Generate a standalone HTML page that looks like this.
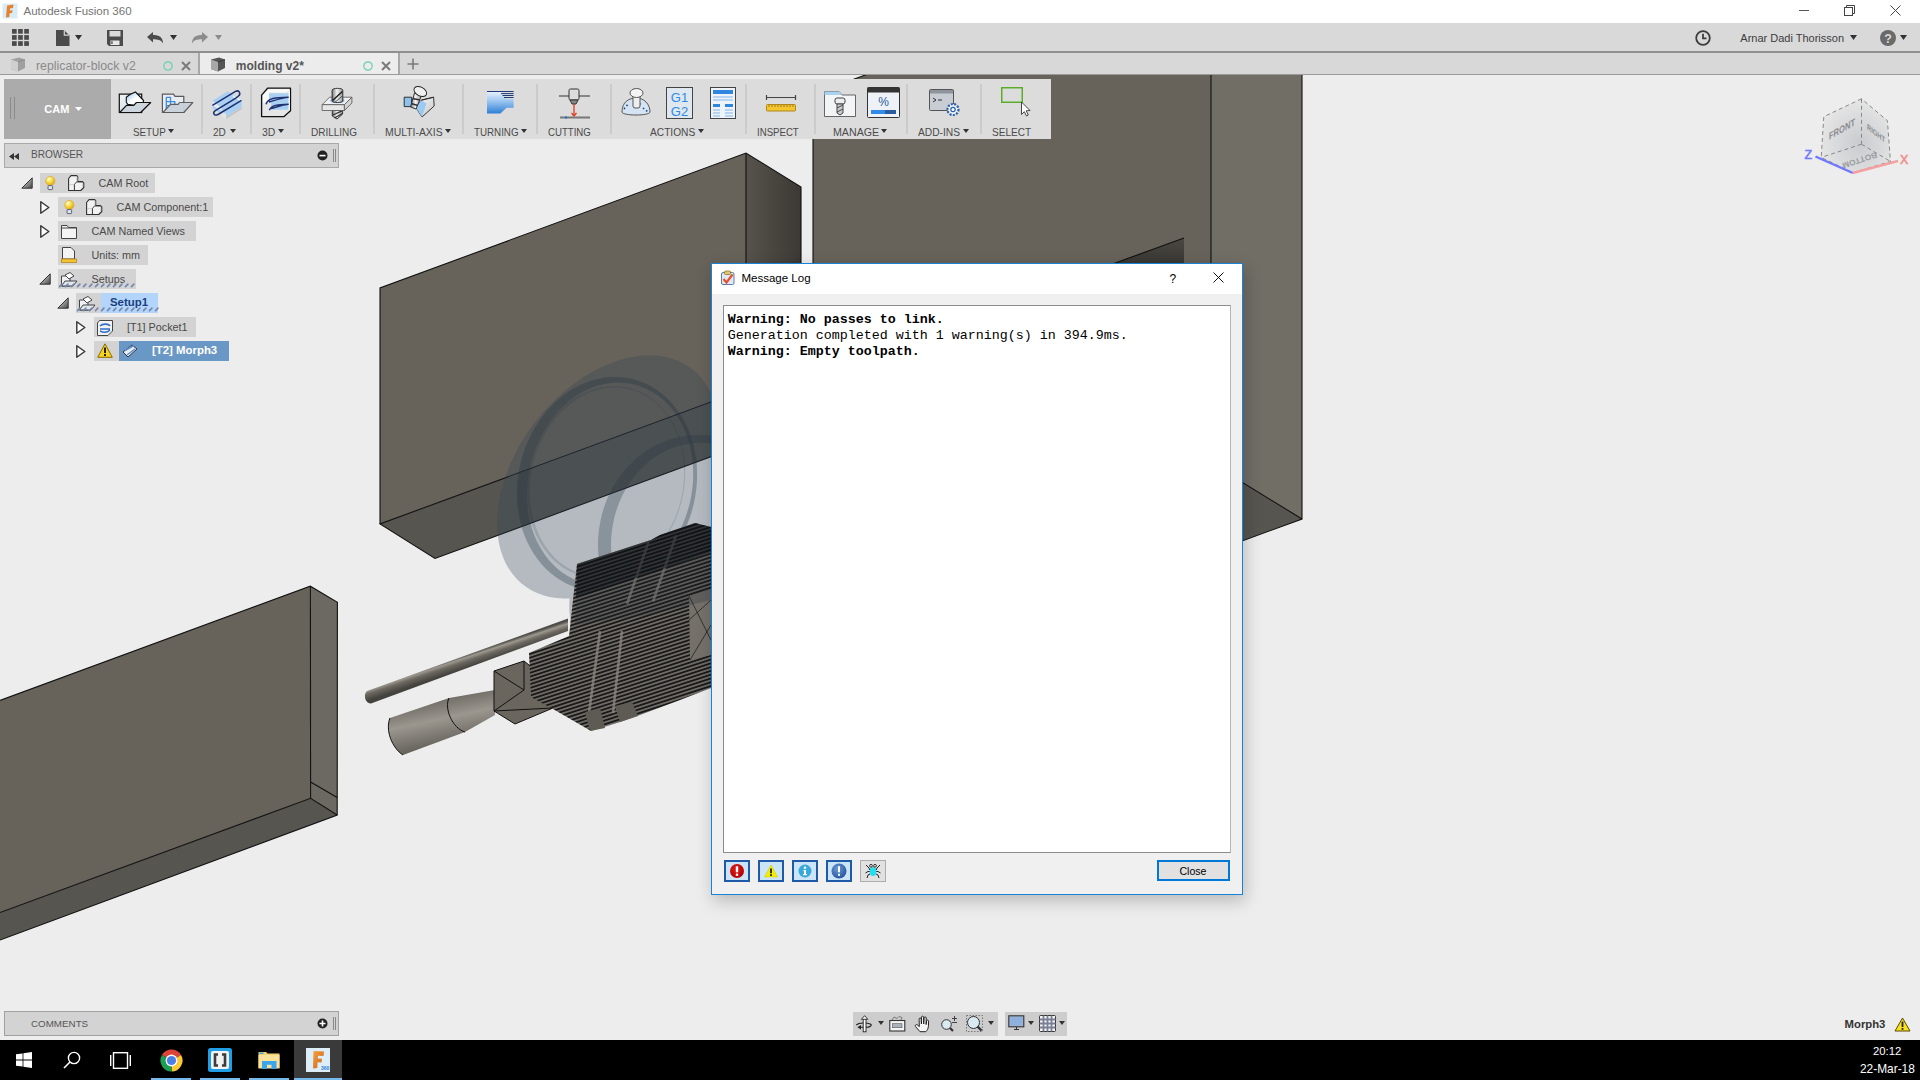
<!DOCTYPE html>
<html><head><meta charset="utf-8">
<style>
*{margin:0;padding:0;box-sizing:border-box}
html,body{width:1920px;height:1080px;overflow:hidden;background:#ededed;font-family:"Liberation Sans",sans-serif}
.a{position:absolute}
.t{position:absolute;white-space:nowrap;line-height:1}
svg{overflow:visible}
</style></head><body>
<div class="a" style="left:0;top:75px;width:1920px;height:965px;overflow:hidden"><svg class="a" style="left:0;top:0" width="1920" height="965" viewBox="0 75 1920 965">
<defs>
<linearGradient id="gA" x1="0" y1="0" x2="1" y2="0"><stop offset="0" stop-color="#57534c"/><stop offset="1" stop-color="#3b3934"/></linearGradient>
<linearGradient id="gTri" x1="0" y1="0" x2="0" y2="1"><stop offset="0" stop-color="#4a4842"/><stop offset="1" stop-color="#34322e"/></linearGradient>
<linearGradient id="gRod" gradientUnits="userSpaceOnUse" x1="465" y1="655" x2="469" y2="667"><stop offset="0" stop-color="#4f4d48"/><stop offset="0.22" stop-color="#9c988f"/><stop offset="0.5" stop-color="#6c6861"/><stop offset="1" stop-color="#45433e"/></linearGradient>
<linearGradient id="gCone" x1="0" y1="0" x2="0.35" y2="1"><stop offset="0" stop-color="#9a968c"/><stop offset="0.3" stop-color="#74706a"/><stop offset="0.55" stop-color="#9b978f"/><stop offset="1" stop-color="#5a5751"/></linearGradient>
<pattern id="hatch" patternUnits="userSpaceOnUse" width="8" height="3.6" patternTransform="rotate(-18)"><rect width="8" height="3.6" fill="#6f6b62"/><rect y="0" width="8" height="1.8" fill="#18191a"/></pattern>
</defs>
<!-- Box C -->
<polygon points="0,700.4 310.3,586.2 310.6,798.3 0,912.6" fill="#67625a"/>
<polygon points="310.3,586.2 337.4,602.4 337.2,815 310.6,798.3" fill="#6b6961"/>
<polygon points="0,912.6 310.6,798.3 337.2,815 0,940" fill="#575550"/>
<g stroke="#111" stroke-width="1.1" fill="none">
<polyline points="0,700.4 310.3,586.2 337.4,602.4 337.2,815 0,940"/>
<line x1="310.4" y1="586.2" x2="310.6" y2="798.3"/>
<polyline points="0,912.6 310.6,798.3 337.2,815"/>
<line x1="310.6" y1="782" x2="337.2" y2="797.5"/>
</g>
<!-- Box A -->
<polygon points="380,288 746,153 746,389 380,524" fill="#67625a"/>
<polygon points="746,153 801,187 801,423 746,389" fill="url(#gA)"/>
<polygon points="380,524 746,389 801,423.5 435,558.5" fill="#575550"/>
<g stroke="#111" stroke-width="1.1" fill="none">
<polyline points="380,524 380,288 746,153 801,187 801,423.5 435,558.5 380,524 746,389 801,423.5"/>
<line x1="746" y1="153" x2="746" y2="389"/>
</g>
<!-- Box B -->
<polygon points="813,94.2 1211,-52 1211,463 813,609.5" fill="#67625a"/>
<polygon points="1211,-52 1302,4 1302,519 1211,463" fill="#716e66"/>
<polygon points="813,609.5 1211,463 1302,519 904,665" fill="#575550"/>
<polygon points="1184,238 1184,270 1096,270" fill="url(#gTri)"/>
<g stroke="#111" stroke-width="1.1" fill="none">
<polyline points="813,94.2 1211,-52 1302,4 1302,519 904,665 813,609.5 813,94.2"/>
<line x1="1211" y1="-52" x2="1211" y2="463"/>
<polyline points="813,609.5 1211,463 1302,519"/>
<polyline points="1184,238 1096,270"/>
</g>
<!-- ghost holder -->
<g><path d="M679.4,533.0 L673.4,540.4 L667.0,547.5 L660.3,554.2 L653.4,560.6 L646.2,566.6 L638.9,572.1 L631.4,577.2 L623.8,581.7 L616.1,585.8 L608.4,589.3 L600.7,592.3 L593.0,594.7 L585.4,596.6 L577.9,597.8 L570.5,598.5 L563.3,598.6 L556.4,598.1 L549.6,597.0 L543.2,595.3 L537.1,593.0 L531.3,590.2 L525.9,586.8 L520.9,582.9 L516.3,578.5 L512.2,573.6 L508.5,568.2 L505.3,562.4 L502.6,556.1 L500.5,549.5 L498.8,542.5 L497.7,535.2 L497.1,527.6 L497.0,519.7 L497.5,511.7 L498.6,503.5 L500.1,495.1 L502.2,486.7 L504.8,478.2 L507.9,469.7 L511.5,461.3 L515.5,452.9 L520.0,444.6 L525.0,436.5 L530.3,428.6 L536.0,421.0 L542.0,413.6 L548.4,406.5 L555.1,399.8 L562.0,393.4 L569.2,387.4 L576.5,381.9 L584.0,376.8 L591.6,372.3 L599.3,368.2 L607.0,364.7 L614.7,361.7 L622.4,359.3 L630.0,357.4 L637.5,356.2 L644.9,355.5 L652.1,355.4 L659.0,355.9 L665.8,357.0 L672.2,358.7 L678.3,361.0 L684.1,363.8 L689.5,367.2 L694.5,371.1 L699.1,375.5 L703.2,380.4 L706.9,385.8 L710.1,391.6 L712.8,397.9 L714.9,404.5 L716.6,411.5 L717.7,418.8 L718.3,426.4 L718.4,434.3 L717.9,442.3 L716.8,450.5 L715.3,458.9 L713.2,467.3 L710.6,475.8 L707.5,484.3 L703.9,492.7 L699.9,501.1 L695.4,509.4 L690.4,517.5 L685.1,525.4 Z M751.7,616.0 L745.7,623.4 L739.3,630.5 L732.6,637.2 L725.7,643.6 L718.5,649.6 L711.2,655.1 L703.7,660.2 L696.1,664.7 L688.4,668.8 L680.7,672.3 L673.0,675.3 L665.3,677.7 L657.7,679.6 L650.2,680.8 L642.8,681.5 L635.6,681.6 L628.7,681.1 L621.9,680.0 L615.5,678.3 L609.4,676.0 L603.6,673.2 L598.2,669.8 L593.2,665.9 L588.6,661.5 L584.5,656.6 L580.8,651.2 L577.6,645.4 L574.9,639.1 L572.8,632.5 L571.1,625.5 L570.0,618.2 L569.4,610.6 L569.3,602.7 L569.8,594.7 L570.9,586.5 L572.4,578.1 L574.5,569.7 L577.1,561.2 L580.2,552.7 L583.8,544.3 L587.8,535.9 L592.3,527.6 L597.3,519.5 L602.6,511.6 L608.3,504.0 L614.3,496.6 L620.7,489.5 L627.4,482.8 L634.3,476.4 L641.5,470.4 L648.8,464.9 L656.3,459.8 L663.9,455.3 L671.6,451.2 L679.3,447.7 L687.0,444.7 L694.7,442.3 L702.3,440.4 L709.8,439.2 L717.2,438.5 L724.4,438.4 L731.3,438.9 L738.1,440.0 L744.5,441.7 L750.6,444.0 L756.4,446.8 L761.8,450.2 L766.8,454.1 L771.4,458.5 L775.5,463.4 L779.2,468.8 L782.4,474.6 L785.1,480.9 L787.2,487.5 L788.9,494.5 L790.0,501.8 L790.6,509.4 L790.7,517.3 L790.2,525.3 L789.1,533.5 L787.6,541.9 L785.5,550.3 L782.9,558.8 L779.8,567.3 L776.2,575.7 L772.2,584.1 L767.7,592.4 L762.7,600.5 L757.4,608.4 Z" fill-rule="nonzero" fill="rgba(50,70,90,0.30)"/><path d="M693.6,504.6 L691.6,511.9 L689.3,519.0 L686.5,526.0 L683.3,532.8 L679.8,539.3 L675.9,545.6 L671.7,551.5 L667.2,557.2 L662.3,562.4 L657.2,567.3 L651.9,571.8 L646.3,575.9 L640.6,579.5 L634.7,582.6 L628.6,585.3 L622.5,587.5 L616.2,589.1 L610.0,590.3 L603.7,590.9 L597.4,591.0 L591.2,590.6 L585.0,589.7 L579.0,588.3 L573.1,586.3 L567.3,583.9 L561.8,580.9 L556.4,577.5 L551.4,573.7 L546.6,569.4 L542.0,564.7 L537.8,559.6 L534.0,554.1 L530.5,548.3 L527.3,542.1 L524.6,535.7 L522.2,529.1 L520.3,522.2 L518.8,515.1 L517.7,507.9 L517.1,500.6 L516.9,493.1 L517.1,485.7 L517.8,478.2 L518.9,470.8 L520.4,463.4 L522.4,456.1 L524.7,449.0 L527.5,442.0 L530.7,435.2 L534.2,428.7 L538.1,422.4 L542.3,416.5 L546.8,410.8 L551.7,405.6 L556.8,400.7 L562.1,396.2 L567.7,392.1 L573.4,388.5 L579.3,385.4 L585.4,382.7 L591.5,380.5 L597.8,378.9 L604.0,377.7 L610.3,377.1 L616.6,377.0 L622.8,377.4 L629.0,378.3 L635.0,379.7 L640.9,381.7 L646.7,384.1 L652.2,387.1 L657.6,390.5 L662.6,394.3 L667.4,398.6 L672.0,403.3 L676.2,408.4 L680.0,413.9 L683.5,419.7 L686.7,425.9 L689.4,432.3 L691.8,438.9 L693.7,445.8 L695.2,452.9 L696.3,460.1 L696.9,467.4 L697.1,474.9 L696.9,482.3 L696.2,489.8 L695.1,497.2 Z M689.8,503.0 L687.9,509.9 L685.7,516.7 L683.1,523.3 L680.1,529.7 L676.8,535.9 L673.2,541.9 L669.3,547.5 L665.1,552.9 L660.6,557.9 L655.9,562.6 L650.9,566.9 L645.7,570.7 L640.4,574.2 L634.9,577.2 L629.3,579.8 L623.6,581.9 L617.9,583.5 L612.1,584.6 L606.3,585.3 L600.5,585.4 L594.7,585.1 L589.1,584.2 L583.5,582.9 L578.1,581.1 L572.8,578.8 L567.7,576.1 L562.8,572.9 L558.1,569.2 L553.7,565.2 L549.6,560.8 L545.7,556.0 L542.2,550.8 L539.0,545.3 L536.1,539.5 L533.6,533.5 L531.5,527.2 L529.8,520.7 L528.4,514.0 L527.5,507.2 L526.9,500.2 L526.8,493.2 L527.0,486.1 L527.7,479.0 L528.8,472.0 L530.2,465.0 L532.1,458.1 L534.3,451.3 L536.9,444.7 L539.9,438.3 L543.2,432.1 L546.8,426.1 L550.7,420.5 L554.9,415.1 L559.4,410.1 L564.1,405.4 L569.1,401.1 L574.3,397.3 L579.6,393.8 L585.1,390.8 L590.7,388.2 L596.4,386.1 L602.1,384.5 L607.9,383.4 L613.7,382.7 L619.5,382.6 L625.3,382.9 L630.9,383.8 L636.5,385.1 L641.9,386.9 L647.2,389.2 L652.3,391.9 L657.2,395.1 L661.9,398.8 L666.3,402.8 L670.4,407.2 L674.3,412.0 L677.8,417.2 L681.0,422.7 L683.9,428.5 L686.4,434.5 L688.5,440.8 L690.2,447.3 L691.6,454.0 L692.5,460.8 L693.1,467.8 L693.2,474.8 L693.0,481.9 L692.3,489.0 L691.2,496.0 Z" fill-rule="evenodd" fill="rgba(30,45,60,0.30)"/><path d="M681.9,500.1 L680.1,506.6 L678.0,513.0 L675.5,519.3 L672.7,525.4 L669.6,531.3 L666.2,536.9 L662.4,542.3 L658.4,547.3 L654.2,552.1 L649.7,556.5 L645.0,560.6 L640.1,564.2 L635.0,567.5 L629.8,570.3 L624.5,572.8 L619.1,574.7 L613.6,576.3 L608.1,577.3 L602.5,577.9 L597.0,578.1 L591.6,577.7 L586.2,576.9 L580.9,575.7 L575.7,574.0 L570.7,571.8 L565.8,569.2 L561.2,566.2 L556.7,562.7 L552.5,558.9 L548.6,554.7 L544.9,550.1 L541.6,545.2 L538.5,540.0 L535.8,534.5 L533.4,528.8 L531.4,522.8 L529.7,516.7 L528.5,510.3 L527.5,503.9 L527.0,497.3 L526.9,490.6 L527.1,483.9 L527.7,477.2 L528.7,470.5 L530.1,463.9 L531.9,457.4 L534.0,451.0 L536.5,444.7 L539.3,438.6 L542.4,432.7 L545.8,427.1 L549.6,421.7 L553.6,416.7 L557.8,411.9 L562.3,407.5 L567.0,403.4 L571.9,399.8 L577.0,396.5 L582.2,393.7 L587.5,391.2 L592.9,389.3 L598.4,387.7 L603.9,386.7 L609.5,386.1 L615.0,385.9 L620.4,386.3 L625.8,387.1 L631.1,388.3 L636.3,390.0 L641.3,392.2 L646.2,394.8 L650.8,397.8 L655.3,401.3 L659.5,405.1 L663.4,409.3 L667.1,413.9 L670.4,418.8 L673.5,424.0 L676.2,429.5 L678.6,435.2 L680.6,441.2 L682.3,447.3 L683.5,453.7 L684.5,460.1 L685.0,466.7 L685.1,473.4 L684.9,480.1 L684.3,486.8 L683.3,493.5 Z M680.9,499.6 L679.2,506.0 L677.1,512.4 L674.7,518.5 L672.0,524.5 L668.9,530.3 L665.5,535.8 L661.9,541.1 L658.0,546.1 L653.8,550.8 L649.4,555.1 L644.8,559.1 L640.0,562.8 L635.1,566.0 L630.0,568.8 L624.8,571.2 L619.5,573.1 L614.2,574.6 L608.8,575.7 L603.4,576.3 L598.1,576.5 L592.7,576.1 L587.5,575.4 L582.3,574.1 L577.3,572.5 L572.4,570.3 L567.7,567.8 L563.1,564.8 L558.8,561.4 L554.7,557.7 L550.9,553.6 L547.3,549.1 L544.1,544.3 L541.1,539.2 L538.5,533.8 L536.2,528.2 L534.2,522.3 L532.6,516.2 L531.3,510.0 L530.5,503.7 L530.0,497.2 L529.8,490.6 L530.1,484.1 L530.7,477.5 L531.7,470.9 L533.1,464.4 L534.8,458.0 L536.9,451.6 L539.3,445.5 L542.0,439.5 L545.1,433.7 L548.5,428.2 L552.1,422.9 L556.0,417.9 L560.2,413.2 L564.6,408.9 L569.2,404.9 L574.0,401.2 L578.9,398.0 L584.0,395.2 L589.2,392.8 L594.5,390.9 L599.8,389.4 L605.2,388.3 L610.6,387.7 L615.9,387.5 L621.3,387.9 L626.5,388.6 L631.7,389.9 L636.7,391.5 L641.6,393.7 L646.3,396.2 L650.9,399.2 L655.2,402.6 L659.3,406.3 L663.1,410.4 L666.7,414.9 L669.9,419.7 L672.9,424.8 L675.5,430.2 L677.8,435.8 L679.8,441.7 L681.4,447.8 L682.7,454.0 L683.5,460.3 L684.0,466.8 L684.2,473.4 L683.9,479.9 L683.3,486.5 L682.3,493.1 Z" fill-rule="evenodd" fill="rgba(30,45,60,0.15)"/><path d="M798.0,545.0 L797.8,552.7 L797.0,560.3 L795.8,567.9 L794.1,575.3 L792.0,582.6 L789.4,589.7 L786.3,596.6 L782.8,603.3 L778.9,609.7 L774.6,615.7 L769.9,621.4 L764.9,626.7 L759.6,631.7 L753.9,636.2 L748.0,640.3 L741.8,643.9 L735.5,647.0 L728.9,649.6 L722.2,651.7 L715.4,653.3 L708.5,654.4 L701.5,654.9 L694.5,654.9 L687.5,654.4 L680.6,653.3 L673.8,651.7 L667.1,649.6 L660.5,647.0 L654.2,643.9 L648.0,640.3 L642.1,636.2 L636.4,631.7 L631.1,626.7 L626.1,621.4 L621.4,615.7 L617.1,609.7 L613.2,603.3 L609.7,596.6 L606.6,589.7 L604.0,582.6 L601.9,575.3 L600.2,567.9 L599.0,560.3 L598.2,552.7 L598.0,545.0 L598.2,537.3 L599.0,529.7 L600.2,522.1 L601.9,514.7 L604.0,507.4 L606.6,500.3 L609.7,493.4 L613.2,486.7 L617.1,480.3 L621.4,474.3 L626.1,468.6 L631.1,463.3 L636.4,458.3 L642.1,453.8 L648.0,449.7 L654.2,446.1 L660.5,443.0 L667.1,440.4 L673.8,438.3 L680.6,436.7 L687.5,435.6 L694.5,435.1 L701.5,435.1 L708.5,435.6 L715.4,436.7 L722.2,438.3 L728.9,440.4 L735.5,443.0 L741.8,446.1 L748.0,449.7 L753.9,453.8 L759.6,458.3 L764.9,463.3 L769.9,468.6 L774.6,474.3 L778.9,480.3 L782.8,486.7 L786.3,493.4 L789.4,500.3 L792.0,507.4 L794.1,514.7 L795.8,522.1 L797.0,529.7 L797.8,537.3 Z M792.0,545.0 L791.8,552.1 L791.1,559.3 L790.0,566.3 L788.5,573.2 L786.5,580.0 L784.2,586.6 L781.4,593.1 L778.2,599.3 L774.7,605.2 L770.8,610.8 L766.6,616.1 L762.1,621.1 L757.2,625.7 L752.1,629.9 L746.8,633.7 L741.2,637.0 L735.4,639.9 L729.5,642.4 L723.4,644.4 L717.2,645.8 L711.0,646.8 L704.7,647.3 L698.3,647.3 L692.0,646.8 L685.8,645.8 L679.6,644.4 L673.5,642.4 L667.6,639.9 L661.8,637.0 L656.2,633.7 L650.9,629.9 L645.8,625.7 L640.9,621.1 L636.4,616.1 L632.2,610.8 L628.3,605.2 L624.8,599.3 L621.6,593.1 L618.8,586.6 L616.5,580.0 L614.5,573.2 L613.0,566.3 L611.9,559.3 L611.2,552.1 L611.0,545.0 L611.2,537.9 L611.9,530.7 L613.0,523.7 L614.5,516.8 L616.5,510.0 L618.8,503.4 L621.6,496.9 L624.8,490.7 L628.3,484.8 L632.2,479.2 L636.4,473.9 L640.9,468.9 L645.8,464.3 L650.9,460.1 L656.2,456.3 L661.8,453.0 L667.6,450.1 L673.5,447.6 L679.6,445.6 L685.8,444.2 L692.0,443.2 L698.3,442.7 L704.7,442.7 L711.0,443.2 L717.2,444.2 L723.4,445.6 L729.5,447.6 L735.4,450.1 L741.2,453.0 L746.8,456.3 L752.1,460.1 L757.2,464.3 L762.1,468.9 L766.6,473.9 L770.8,479.2 L774.7,484.8 L778.2,490.7 L781.4,496.9 L784.2,503.4 L786.5,510.0 L788.5,516.8 L790.0,523.7 L791.1,530.7 L791.8,537.9 Z" fill-rule="evenodd" fill="rgba(40,55,70,0.30)"/></g>
<!-- rod -->
<path d="M367,691 L568,618.5 L568,631 L371,703.5 C365,704 363,694 367,691 Z" fill="url(#gRod)"/>
<!-- cone -->
<path d="M390,718 L449,698 L495,690 L495,715 L465,732 L403,755 C392,748 385,730 390,718 Z" fill="url(#gCone)"/>
<path d="M449,698 C444,708 452,728 465,732" stroke="#111" stroke-width="1" fill="none"/>
<path d="M390,718 C385,730 392,748 403,755" stroke="#111" stroke-width="1" fill="none"/>
<!-- holder cube -->
<polygon points="494,671 524,661 560,690 553,708 515,724 494,711" fill="#6a665e"/>
<g stroke="#111" stroke-width="1" fill="none">
<polyline points="494,671 524,661 560,690 553,708 515,724 494,711 494,671"/>
<line x1="494" y1="671" x2="524" y2="690"/><line x1="494" y1="711" x2="524" y2="690"/><line x1="494" y1="711" x2="553" y2="708"/><line x1="524" y1="661" x2="524" y2="690"/>
</g>
<!-- mesh -->
<polygon points="529,653 569,636 577,564 651,540 660,535 695,523 711,527 711,688 680,700 640,715 620,722 591,731 553,709 531,697" fill="url(#hatch)"/>
<polygon points="689,596 711,590 711,655 690,660" fill="#75716a"/>
<path d="M689,596 L711,640 M689,620 L711,600 M690,660 L711,625" stroke="#222" stroke-width="0.8"/>
<g stroke="#8d8a82" stroke-width="2.6" opacity="0.75" fill="none">
<path d="M648.5,542 L627,604"/><path d="M676,535.5 L653,601.5"/>
<path d="M600,631 L589,713"/><path d="M622,631 L613,713"/>
</g>
<polygon points="577,564 651,540 660,535 695,523 711,527 711,552 660,570 600,590 576,598" fill="rgba(12,16,22,0.62)"/><polygon points="576,598 600,590 660,570 711,552 711,600 650,615 575,625" fill="rgba(30,40,50,0.25)"/>
<polygon points="585,712 600,708 605,728 590,731" fill="#5e5b55"/>
<polygon points="615,706 632,702 638,716 620,722" fill="#5e5b55"/>
</svg></div>
<div class="a" style="left:0px;top:0px;width:1920px;height:23px;background:#fff;"></div>
<svg class="a" style="left:2px;top:3px;" width="16" height="16" viewBox="0 0 16 16"><rect x="0.5" y="0.5" width="15" height="15" fill="#d7ecf8"/><path d="M5 2.5 L11.5 1.5 L11 5 L8 5.4 L7.8 7.6 L10.5 7.3 L10.2 10 L7.6 10.3 L7.3 14 L4 14.5 Z" fill="#e8822a"/></svg>
<div class="t" style="left:23.5px;top:5.87px;font-size:11.5px;color:#747474;font-weight:400;font-family:'Liberation Sans',sans-serif;">Autodesk Fusion 360</div>
<div class="a" style="left:1799px;top:10px;width:10px;height:1px;background:#555;"></div>
<svg class="a" style="left:1844px;top:5px;" width="11" height="11" viewBox="0 0 11 11"><rect x="0.5" y="2.5" width="8" height="8" fill="none" stroke="#444"/><path d="M2.5 2.5 V0.5 H10.5 V8.5 H8.5" fill="none" stroke="#444"/></svg>
<svg class="a" style="left:1890px;top:5px;" width="11" height="11" viewBox="0 0 11 11"><path d="M0.5 0.5 L10.5 10.5 M10.5 0.5 L0.5 10.5" stroke="#444" stroke-width="1"/></svg>
<div class="a" style="left:0px;top:23px;width:1920px;height:28px;background:#d9d9d9;"></div>
<div class="a" style="left:0px;top:51px;width:1920px;height:2px;background:#8f8f8f;"></div>
<svg class="a" style="left:12px;top:29px;" width="17" height="17" viewBox="0 0 17 17"><rect x="0.0" y="0.0" width="4.7" height="4.7" fill="#4b4b4b"/><rect x="0.0" y="6.1" width="4.7" height="4.7" fill="#4b4b4b"/><rect x="0.0" y="12.2" width="4.7" height="4.7" fill="#4b4b4b"/><rect x="6.1" y="0.0" width="4.7" height="4.7" fill="#4b4b4b"/><rect x="6.1" y="6.1" width="4.7" height="4.7" fill="#4b4b4b"/><rect x="6.1" y="12.2" width="4.7" height="4.7" fill="#4b4b4b"/><rect x="12.2" y="0.0" width="4.7" height="4.7" fill="#4b4b4b"/><rect x="12.2" y="6.1" width="4.7" height="4.7" fill="#4b4b4b"/><rect x="12.2" y="12.2" width="4.7" height="4.7" fill="#4b4b4b"/></svg>
<svg class="a" style="left:56px;top:30px;" width="14" height="16" viewBox="0 0 14 16"><path d="M0 0 H8 L13.5 5.5 V16 H0 Z" fill="#4b4b4b"/><path d="M8.3 0.3 V5.2 H13.2" fill="none" stroke="#d9d9d9" stroke-width="1.2"/></svg>
<svg class="a" style="left:75px;top:35px;" width="8" height="5" viewBox="0 0 8 5"><path d="M0 0 H7 L3.5 5 Z" fill="#333"/></svg>
<svg class="a" style="left:107px;top:30px;" width="16" height="16" viewBox="0 0 16 16"><path d="M0 0 H16 V16 H2 L0 14 Z" fill="#4b4b4b"/><rect x="2.5" y="1" width="11" height="5.5" fill="#d9d9d9"/><rect x="3.5" y="10.5" width="9" height="4.5" fill="#e8e8e8"/><rect x="4.3" y="11.2" width="1.3" height="2.8" fill="#4b4b4b"/></svg>
<svg class="a" style="left:147px;top:32px;" width="17" height="12" viewBox="0 0 17 12"><path d="M0 5 L6 0 V3 C12 3 16 5 16 11.5 C14 8 11 7.3 6 7.3 V10.5 Z" fill="#4b4b4b"/></svg>
<svg class="a" style="left:170px;top:35px;" width="8" height="5" viewBox="0 0 8 5"><path d="M0 0 H7 L3.5 5 Z" fill="#333"/></svg>
<svg class="a" style="left:192px;top:32px;" width="17" height="12" viewBox="0 0 17 12"><path d="M16 5 L10 0 V3 C4 3 0 5 0 11.5 C2 8 5 7.3 10 7.3 V10.5 Z" fill="#8c8c8c"/></svg>
<svg class="a" style="left:215px;top:35px;" width="8" height="5" viewBox="0 0 8 5"><path d="M0 0 H7 L3.5 5 Z" fill="#8c8c8c"/></svg>
<svg class="a" style="left:1695px;top:30px;" width="16" height="16" viewBox="0 0 16 16"><circle cx="8" cy="8" r="6.8" fill="none" stroke="#3c3c3c" stroke-width="1.8"/><path d="M8 3.8 V8.3 H11.5" fill="none" stroke="#3c3c3c" stroke-width="1.8"/></svg>
<div class="t" style="left:1740.3px;top:32.69px;font-size:11px;color:#3d3d3d;font-weight:400;font-family:'Liberation Sans',sans-serif;">Arnar Dadi Thorisson</div>
<svg class="a" style="left:1850px;top:35px;" width="7" height="5" viewBox="0 0 7 5"><path d="M0 0 H7 L3.5 5 Z" fill="#333"/></svg>
<svg class="a" style="left:1880px;top:30px;" width="16" height="16" viewBox="0 0 16 16"><circle cx="8" cy="8" r="8" fill="#6a6a6a"/><text x="8" y="12.6" font-family="Liberation Sans" font-weight="700" font-size="12.5" fill="#d9d9d9" text-anchor="middle">?</text></svg>
<svg class="a" style="left:1900px;top:35px;" width="7" height="5" viewBox="0 0 7 5"><path d="M0 0 H7 L3.5 5 Z" fill="#333"/></svg>
<div class="a" style="left:0px;top:53px;width:1920px;height:21px;background:#d8d8d8;"></div>
<div class="a" style="left:200px;top:53px;width:198px;height:21px;background:#ececec;"></div>
<div class="a" style="left:198px;top:53px;width:2px;height:21px;background:#a8a8a8;"></div>
<div class="a" style="left:398px;top:53px;width:2px;height:21px;background:#a8a8a8;"></div>
<div class="a" style="left:0px;top:74px;width:1920px;height:1px;background:#9a9a9a;"></div>
<svg class="a" style="left:10px;top:57px;" width="16" height="15" viewBox="0 0 16 15"><path d="M1 2.5 L9 0.5 L15 2.5 V11 L8 14.5 L1 12 Z" fill="#a0a0a0"/><path d="M1 2.5 L8 5 V14.5 L1 12 Z" fill="#cfcfcf"/><path d="M8 5 L15 2.5" stroke="#888" stroke-width="0.8"/></svg>
<div class="t" style="left:36px;top:60.09px;font-size:12.3px;color:#8a8a8a;font-weight:400;font-family:'Liberation Sans',sans-serif;">replicator-block v2</div>
<svg class="a" style="left:163px;top:61px;" width="10" height="10" viewBox="0 0 10 10"><circle cx="5" cy="5" r="4.2" fill="none" stroke="#6dd0b0" stroke-width="1.2"/></svg>
<svg class="a" style="left:181px;top:61px;" width="10" height="10" viewBox="0 0 10 10"><path d="M1 1 L9 9 M9 1 L1 9" stroke="#7a7a7a" stroke-width="2"/></svg>
<svg class="a" style="left:210px;top:57px;" width="16" height="15" viewBox="0 0 16 15"><path d="M1 2.5 L9 0.5 L15 2.5 V11 L8 14.5 L1 12 Z" fill="#555"/><path d="M1 2.5 L8 5 V14.5 L1 12 Z" fill="#a8a8a8"/><path d="M8 5 L15 2.5" stroke="#333" stroke-width="0.8"/></svg>
<div class="t" style="left:235.8px;top:60.34px;font-size:12px;color:#555;font-weight:700;font-family:'Liberation Sans',sans-serif;">molding v2*</div>
<svg class="a" style="left:363px;top:61px;" width="10" height="10" viewBox="0 0 10 10"><circle cx="5" cy="5" r="4.2" fill="none" stroke="#6dd0b0" stroke-width="1.2"/></svg>
<svg class="a" style="left:381px;top:61px;" width="10" height="10" viewBox="0 0 10 10"><path d="M1 1 L9 9 M9 1 L1 9" stroke="#7a7a7a" stroke-width="2"/></svg>
<svg class="a" style="left:407px;top:58px;" width="12" height="12" viewBox="0 0 12 12"><path d="M6 0.5 V11.5 M0.5 6 H11.5" stroke="#7a7a7a" stroke-width="1.6"/></svg>
<div class="a" style="left:4px;top:79px;width:1047px;height:60px;background:#dcdcdc;"></div>
<div class="a" style="left:4px;top:79px;width:107px;height:60px;background:#ababab;"></div>
<div class="a" style="left:10px;top:97px;width:1px;height:22px;background:#8a8a8a;"></div>
<div class="a" style="left:14px;top:97px;width:1px;height:22px;background:#8a8a8a;"></div>
<div class="t" style="left:44.3px;top:104.49px;font-size:11px;color:#fff;font-weight:700;font-family:'Liberation Sans',sans-serif;">CAM</div>
<svg class="a" style="left:75px;top:107px;" width="7" height="4" viewBox="0 0 7 4"><path d="M0 0 H7 L3.5 4 Z" fill="#fff"/></svg>
<div class="a" style="left:201px;top:84px;width:2px;height:50px;background:#cbcbcb;"></div>
<div class="a" style="left:250px;top:84px;width:2px;height:50px;background:#cbcbcb;"></div>
<div class="a" style="left:299px;top:84px;width:2px;height:50px;background:#cbcbcb;"></div>
<div class="a" style="left:373px;top:84px;width:2px;height:50px;background:#cbcbcb;"></div>
<div class="a" style="left:462px;top:84px;width:2px;height:50px;background:#cbcbcb;"></div>
<div class="a" style="left:536px;top:84px;width:2px;height:50px;background:#cbcbcb;"></div>
<div class="a" style="left:610px;top:84px;width:2px;height:50px;background:#cbcbcb;"></div>
<div class="a" style="left:745px;top:84px;width:2px;height:50px;background:#cbcbcb;"></div>
<div class="a" style="left:814px;top:84px;width:2px;height:50px;background:#cbcbcb;"></div>
<div class="a" style="left:906px;top:84px;width:2px;height:50px;background:#cbcbcb;"></div>
<div class="a" style="left:980px;top:84px;width:2px;height:50px;background:#cbcbcb;"></div>
<div class="t" style="left:133.4px;top:126.66px;font-size:10.8px;color:#4a4a4a;font-weight:400;font-family:'Liberation Sans',sans-serif;transform:scaleX(0.91);transform-origin:0 0">SETUP</div>
<div class="t" style="left:212.9px;top:126.66px;font-size:10.8px;color:#4a4a4a;font-weight:400;font-family:'Liberation Sans',sans-serif;transform:scaleX(0.928);transform-origin:0 0">2D</div>
<div class="t" style="left:261.9px;top:126.66px;font-size:10.8px;color:#4a4a4a;font-weight:400;font-family:'Liberation Sans',sans-serif;transform:scaleX(0.965);transform-origin:0 0">3D</div>
<div class="t" style="left:310.9px;top:126.66px;font-size:10.8px;color:#4a4a4a;font-weight:400;font-family:'Liberation Sans',sans-serif;transform:scaleX(0.926);transform-origin:0 0">DRILLING</div>
<div class="t" style="left:384.9px;top:126.66px;font-size:10.8px;color:#4a4a4a;font-weight:400;font-family:'Liberation Sans',sans-serif;transform:scaleX(0.964);transform-origin:0 0">MULTI-AXIS</div>
<div class="t" style="left:473.9px;top:126.66px;font-size:10.8px;color:#4a4a4a;font-weight:400;font-family:'Liberation Sans',sans-serif;transform:scaleX(0.905);transform-origin:0 0">TURNING</div>
<div class="t" style="left:547.9px;top:126.66px;font-size:10.8px;color:#4a4a4a;font-weight:400;font-family:'Liberation Sans',sans-serif;transform:scaleX(0.891);transform-origin:0 0">CUTTING</div>
<div class="t" style="left:649.9px;top:126.66px;font-size:10.8px;color:#4a4a4a;font-weight:400;font-family:'Liberation Sans',sans-serif;transform:scaleX(0.942);transform-origin:0 0">ACTIONS</div>
<div class="t" style="left:756.9px;top:126.66px;font-size:10.8px;color:#4a4a4a;font-weight:400;font-family:'Liberation Sans',sans-serif;transform:scaleX(0.892);transform-origin:0 0">INSPECT</div>
<div class="t" style="left:832.9px;top:126.66px;font-size:10.8px;color:#4a4a4a;font-weight:400;font-family:'Liberation Sans',sans-serif;transform:scaleX(0.986);transform-origin:0 0">MANAGE</div>
<div class="t" style="left:917.9px;top:126.66px;font-size:10.8px;color:#4a4a4a;font-weight:400;font-family:'Liberation Sans',sans-serif;transform:scaleX(0.948);transform-origin:0 0">ADD-INS</div>
<div class="t" style="left:991.9px;top:126.66px;font-size:10.8px;color:#4a4a4a;font-weight:400;font-family:'Liberation Sans',sans-serif;transform:scaleX(0.932);transform-origin:0 0">SELECT</div>
<svg class="a" style="left:168px;top:129px;" width="6" height="4" viewBox="0 0 6 4"><path d="M0 0 H6 L3 4 Z" fill="#333"/></svg>
<svg class="a" style="left:229.5px;top:129px;" width="6" height="4" viewBox="0 0 6 4"><path d="M0 0 H6 L3 4 Z" fill="#333"/></svg>
<svg class="a" style="left:278px;top:129px;" width="6" height="4" viewBox="0 0 6 4"><path d="M0 0 H6 L3 4 Z" fill="#333"/></svg>
<svg class="a" style="left:445px;top:129px;" width="6" height="4" viewBox="0 0 6 4"><path d="M0 0 H6 L3 4 Z" fill="#333"/></svg>
<svg class="a" style="left:521px;top:129px;" width="6" height="4" viewBox="0 0 6 4"><path d="M0 0 H6 L3 4 Z" fill="#333"/></svg>
<svg class="a" style="left:698px;top:129px;" width="6" height="4" viewBox="0 0 6 4"><path d="M0 0 H6 L3 4 Z" fill="#333"/></svg>
<svg class="a" style="left:881px;top:129px;" width="6" height="4" viewBox="0 0 6 4"><path d="M0 0 H6 L3 4 Z" fill="#333"/></svg>
<svg class="a" style="left:963px;top:129px;" width="6" height="4" viewBox="0 0 6 4"><path d="M0 0 H6 L3 4 Z" fill="#333"/></svg>
<svg class="a" style="left:115px;top:86px;" width="82" height="32" viewBox="0 0 82 32"><defs><linearGradient id="sg1" x1="0" y1="0" x2="1" y2="1"><stop offset="0" stop-color="#f4f6f8"/><stop offset="1" stop-color="#c9d3dd"/></linearGradient><linearGradient id="sg2" x1="0" y1="0" x2="1" y2="1"><stop offset="0" stop-color="#8cc0f0"/><stop offset="0.5" stop-color="#fff"/></linearGradient></defs><rect x="4.3" y="8.1" width="22.4" height="18.4" fill="url(#sg1)" stroke="#111" stroke-width="1.2"/><path d="M11.3,11.3 L15,8.5 L20.5,6 L28.6,14.5 L28.2,16.2 L18.8,19.4 L12.8,18.4 L11.3,16.2 Z" fill="url(#sg2)" stroke="#111" stroke-width="1.1"/><path d="M11.5,19.4 L18.8,19.4 L21.4,16.5 L35.7,16.5 L25.6,26.5 L4.7,26.5 Z" fill="#cdd5dd" stroke="#111" stroke-width="1.2" stroke-linejoin="round"/><path d="M47.4,26.5 V8.1 H58.5 L60,10.3 H68.8 V26.5 Z" fill="#e9edf1" stroke="#5a5a5a" stroke-width="1.2" stroke-linejoin="round"/><path d="M51.3,11.3 H55.5 V15.7 H59.8 V19.7 M51.3,11.3 V24 M51.3,15.7 H55.5 M51.3,19.7 H59.8 M55.5,15.7 V19.7" fill="none" stroke="#3b8ee0" stroke-width="1.3"/><path d="M55.5,18.4 L63.2,18.4 L64.5,16.5 L77.8,16.5 L68.8,26.5 L47.9,26.5 Z" fill="#c9d1da" stroke="#5a5a5a" stroke-width="1.2" stroke-linejoin="round" opacity="0.95"/></svg>
<svg class="a" style="left:208px;top:85px;" width="88" height="36" viewBox="0 0 88 36"><path d="M4.4,15.8 L19.7,6.2 L33.7,15.1 L33.7,22 L18,32 L4.8,23.5 Z" fill="#a9cff3"/><path d="M4.4,15.8 L4.8,20.5 L13.5,26 L13.5,23 Z" fill="#e8eef4"/><path d="M18,32 L33.7,22 L33.7,24 L18,34 Z" fill="#c4c4c4"/><path d="M13.5,26 L18,29 L18,34 L13.5,31 Z" fill="#e4e4e4"/><path d="M24.5,10 L33.7,15.1 L33.7,17 L25,12 Z" fill="#eef3f8"/><path d="M4.4,20.4 L27.5,6.4 C31.5,4.5 33,9 30.5,11 L27.5,13.3 L7.3,25.7 C4.5,27.5 5.5,31.5 10,29.5 L33.5,15.3" fill="none" stroke="#1f3070" stroke-width="1.5" stroke-linejoin="round"/><path d="M53.6,10.1 L59.6,3.2 L82.5,3.2 L82.5,25.7 L76.1,31.6 L53.6,31.6 Z" fill="#e6e6e6" stroke="#111" stroke-width="1.3" stroke-linejoin="round"/><path d="M55,10.5 L60.2,4.3 L81.5,4.3 L78.5,7.5 L61,7.5 L61,17.4 L55,17.4 Z" fill="#fafafa"/><path d="M61,8.2 L80.7,8.2 L80.7,24.7 L63.2,24.7 L63.2,17.4 L61,17.4 Z" fill="#a9cff3"/><path d="M80.7,5 L81.8,5 L81.8,25 L80.7,25.5 Z" fill="#fff"/><path d="M58,19.2 C60,13 67,12.5 80.7,12.2 M61,17 C66,16 72,13 80.7,12.4 M61.4,25.2 C63,20 70,19.5 80.7,19.3 M63,23.5 C68,22.5 73,20 80.7,19.4" fill="none" stroke="#1f3070" stroke-width="1.4"/></svg>
<svg class="a" style="left:316px;top:84px;" width="40" height="38" viewBox="0 0 40 38"><defs><linearGradient id="dg" x1="0" y1="0" x2="1" y2="0"><stop offset="0" stop-color="#777"/><stop offset="0.45" stop-color="#f4f4f4"/><stop offset="1" stop-color="#999"/></linearGradient></defs><path d="M16.3,26.5 V32 L21,35 L26.6,30 V26.5 Z" fill="url(#dg)" stroke="#222" stroke-width="0.9"/><path d="M17,31 L26,26.8 M18.5,34 L26.4,29.5" stroke="#333" stroke-width="1.3"/><path d="M6.1,20.7 L13.6,13.2 H35.9 L28.4,20.7 Z" fill="#efefef" stroke="#555" stroke-width="0.8"/><path d="M6.1,20.7 H28.4 V26.5 H6.1 Z" fill="#e6e6e6" stroke="#555" stroke-width="0.8"/><path d="M28.4,20.7 L35.9,13.2 V19 L28.4,26.5 Z" fill="#d4d4d4" stroke="#555" stroke-width="0.8"/><ellipse cx="21.3" cy="16.5" rx="7.2" ry="2.7" fill="#8ec2ee"/><path d="M16.1,6.3 C16.1,3.7 26.8,3.7 26.8,6.3 V17 C26.8,19 16.1,19 16.1,17 Z" fill="url(#dg)" stroke="#222" stroke-width="0.9"/><path d="M16.6,16.5 L26.4,7.5" stroke="#222" stroke-width="1.6"/><path d="M19,18.3 L26.5,11.8" stroke="#555" stroke-width="1"/></svg>
<svg class="a" style="left:400px;top:84px;" width="40" height="38" viewBox="0 0 40 38"><defs><linearGradient id="mg" x1="0" y1="0" x2="1" y2="1"><stop offset="0" stop-color="#f6f6f6"/><stop offset="1" stop-color="#c8c8c8"/></linearGradient></defs><path d="M4.2,13.2 H11.6 V22.6 H4.2 Z" fill="#8ec2ee" stroke="#222" stroke-width="0.9"/><path d="M15.8,23.3 L21.3,16.2 L33.6,13.2 L34.2,22 L22,33 Z" fill="url(#mg)" stroke="#222" stroke-width="0.9" stroke-linejoin="round"/><path d="M15.8,23.3 L21.3,16.2 L26.5,19.4 L22,33 Z" fill="#9ccaf2"/><path d="M21.3,16.2 L33.6,13.2" stroke="#222" stroke-width="0.9"/><path d="M14.5,9 L21.5,11.5 L16,25 L10.5,23 Z" fill="url(#dg)" stroke="#222" stroke-width="0.9"/><path d="M12.5,14.5 L20,16 M11,19.5 L18,21.5" stroke="#333" stroke-width="1.5"/><ellipse cx="20.3" cy="7.5" rx="6.8" ry="4.3" transform="rotate(28 20.3 7.5)" fill="#f0f0f0" stroke="#222" stroke-width="0.9"/></svg>
<svg class="a" style="left:487px;top:91px;" width="28" height="24" viewBox="0 0 28 24"><defs><linearGradient id="tg" x1="0" y1="0" x2="0" y2="1"><stop offset="0" stop-color="#eef5fc"/><stop offset="0.45" stop-color="#9cc6f0"/><stop offset="1" stop-color="#2f7fd6"/></linearGradient></defs><path d="M0,0 H13.4 L19.6,8 H26.6 V16.8 H19.6 L13.4,22.5 H0 Z" fill="url(#tg)"/><path d="M0,0.5 H26.6 M14,2.6 H26.6 M15.5,4.5 H26.6 M17,6.5 H26.6" stroke="#1f3a78" stroke-width="1"/></svg>
<svg class="a" style="left:559px;top:88px;" width="32" height="31" viewBox="0 0 32 31"><path d="M0 8 H31" stroke="#333" stroke-width="1"/><rect x="10" y="1" width="10" height="11" rx="1.5" fill="#ddd" stroke="#333"/><path d="M11 12 H19 L17 16 H13 Z" fill="#888" stroke="#333"/><path d="M15 16 V28" stroke="#e0391a" stroke-width="1.3"/><path d="M12.5 25 L15 28 L17.5 25" fill="none" stroke="#e0391a" stroke-width="1.2"/><path d="M1 29.5 H31" stroke="#777" stroke-width="2"/><rect x="6" y="28.5" width="2" height="2" fill="#1c6ad8"/></svg>
<svg class="a" style="left:621px;top:88px;" width="30" height="30" viewBox="0 0 30 30"><path d="M1 24 C1 14 8 10 15 10 C23 10 29 16 29 24 C29 28 1 28 1 24 Z" fill="#d5e4f4" stroke="#555"/><path d="M3 21 L8 15 M12 13 L20 16 M22 20 L27 24" stroke="#1f3f7a" stroke-width="1.6" stroke-dasharray="1.5 2.5"/><rect x="12" y="6" width="7" height="14" rx="2" fill="#eee" stroke="#555"/><ellipse cx="15.5" cy="5" rx="6.5" ry="4.5" fill="#f4f4f4" stroke="#555"/></svg>
<svg class="a" style="left:666px;top:87px;" width="27" height="32" viewBox="0 0 27 32"><rect x="0.5" y="0.5" width="26" height="31" fill="#dfe7ef" stroke="#444"/><text x="13.5" y="14.5" text-anchor="middle" font-family="Liberation Sans" font-size="13" fill="#2e8ae6">G1</text><text x="13.5" y="28.5" text-anchor="middle" font-family="Liberation Sans" font-size="13" fill="#2e8ae6">G2</text></svg>
<svg class="a" style="left:710px;top:87px;" width="26" height="32" viewBox="0 0 26 32"><rect x="0.5" y="0.5" width="25" height="31" fill="#eef3f8" stroke="#444"/><rect x="3" y="3" width="20" height="4" fill="#2f86e0"/><path d="M3 10 H23 M3 13 H23 M3 23 H10 M15 23 H23 M3 26 H10 M15 26 H23 M3 29 H10 M15 29 H23" stroke="#7fb6ef" stroke-width="1"/><rect x="3" y="17" width="7" height="3" fill="#2f86e0"/><rect x="15" y="17" width="8" height="3" fill="#2f86e0"/></svg>
<svg class="a" style="left:766px;top:95px;" width="30" height="17" viewBox="0 0 30 17"><path d="M0.5 0 V5 M29.5 0 V5 M0.5 2.5 H29.5" stroke="#444" stroke-width="1.2"/><rect x="0.5" y="9.5" width="29" height="6.5" rx="1" fill="#f2c531" stroke="#b3861a"/><path d="M3 10 V12 M6 10 V12 M9 10 V12 M12 10 V12 M15 10 V12 M18 10 V12 M21 10 V12 M24 10 V12 M27 10 V12" stroke="#8a6a10" stroke-width="0.8"/></svg>
<svg class="a" style="left:824px;top:90px;" width="33" height="28" viewBox="0 0 33 28"><path d="M0.5 1.5 H15 L18 5 H31.5 V26.5 H0.5 Z" fill="#f2f4f6" stroke="#666"/><path d="M0.5 1.5 H15 L18 5 H0.5 Z" fill="#a9d2ee"/><rect x="11" y="8" width="10" height="6" rx="2" fill="#eee" stroke="#444"/><path d="M13 14 H19 V23 L16 25 L13 23 Z" fill="#ccc" stroke="#444"/><path d="M13 18 L19 15 M13 22 L19 19" stroke="#444"/></svg>
<svg class="a" style="left:867px;top:87px;" width="33" height="31" viewBox="0 0 33 31"><rect x="0.5" y="0.5" width="32" height="30" rx="1" fill="#eef2f6" stroke="#333"/><rect x="0.5" y="0.5" width="32" height="5" fill="#333"/><text x="16.5" y="19" text-anchor="middle" font-family="Liberation Sans" font-size="12" fill="#2a5e9e">%</text><rect x="4" y="23" width="14" height="4" fill="#2f8be6"/><rect x="18" y="23" width="11" height="4" fill="#2a5e9e"/></svg>
<svg class="a" style="left:929px;top:89px;" width="32" height="27" viewBox="0 0 32 27"><rect x="0.5" y="0.5" width="24" height="21" rx="1" fill="#c8cdd4" stroke="#555"/><rect x="1" y="1" width="23" height="3.5" fill="#8e949b"/><path d="M4 9 L7 11 L4 13 M9 11 H13" fill="none" stroke="#333" stroke-width="1"/><circle cx="24" cy="20.5" r="5.5" fill="#eef3fa" stroke="#2a5fa8" stroke-width="2.2" stroke-dasharray="2 1.3"/><circle cx="24" cy="20.5" r="2.2" fill="#fff" stroke="#2a5fa8" stroke-width="1.2"/></svg>
<svg class="a" style="left:1001px;top:87px;" width="31" height="30" viewBox="0 0 31 30"><rect x="0.75" y="0.75" width="20.5" height="14.5" fill="none" stroke="#5cae2a" stroke-width="1.5"/><path d="M20.5 15 V27.5 L23.3 24.7 L25.5 29 L27.3 28 L25.2 23.8 L29 23.5 Z" fill="#fff" stroke="#333" stroke-width="0.9"/></svg>
<div class="a" style="left:4px;top:143px;width:335px;height:25px;background:#d3d3d3;border:1px solid #a9a9a9"></div>
<svg class="a" style="left:9px;top:153px;" width="11" height="7" viewBox="0 0 11 7"><path d="M0 3.5 L5 0 V7 Z M5 3.5 L10 0 V7 Z" fill="#333"/></svg>
<div class="t" style="left:31px;top:150.35px;font-size:10.1px;color:#555;font-weight:400;font-family:'Liberation Sans',sans-serif;">BROWSER</div>
<svg class="a" style="left:317px;top:150px;" width="11" height="11" viewBox="0 0 11 11"><circle cx="5.5" cy="5.5" r="5" fill="#222"/><rect x="2.5" y="4.8" width="6" height="1.6" fill="#fff"/></svg>
<div class="a" style="left:333px;top:149px;width:1px;height:13px;background:#888;"></div>
<div class="a" style="left:335px;top:149px;width:1px;height:13px;background:#888;"></div>
<div class="a" style="left:40px;top:173px;width:115px;height:20px;background:#d3d3d3;"></div>
<svg class="a" style="left:21px;top:177px;" width="12" height="12" viewBox="0 0 12 12"><defs><linearGradient id="ft" x1="0" y1="0" x2="1" y2="1"><stop offset="0" stop-color="#f4f4f4"/><stop offset="1" stop-color="#444"/></linearGradient></defs><path d="M11.2 0.8 V11.2 H0.8 Z" fill="url(#ft)" stroke="#333" stroke-width="1"/></svg>
<svg class="a" style="left:45px;top:176px;" width="11" height="14" viewBox="0 0 11 14"><defs><radialGradient id="bg1" cx="0.35" cy="0.3" r="0.7"><stop offset="0" stop-color="#fffde0"/><stop offset="0.45" stop-color="#f7e24a"/><stop offset="1" stop-color="#e0a820"/></radialGradient></defs><circle cx="5.3" cy="5" r="4.6" fill="url(#bg1)" stroke="#e2a52a" stroke-width="0.7"/><rect x="3" y="9.6" width="4.6" height="4" rx="0.8" fill="#dfe3ea" stroke="#4c5670" stroke-width="0.9"/></svg>
<svg class="a" style="left:68px;top:175px;" width="17" height="17" viewBox="0 0 17 17"><path d="M0.6,3.5 L3,0.6 H8.7 L9.7,1.6 V6.6 H14.4 L15.8,8 V12.5 L12.7,15.5 H0.6 Z" fill="#f2f2f2" stroke="#333" stroke-width="1.1" stroke-linejoin="round"/><path d="M6.4,15.5 V9.2 L8.9,6.8 H14.2" fill="none" stroke="#333" stroke-width="1"/><path d="M1,9.6 H6.2 M8.9,1.6 V6.6 M14.6,8.3 V12.5" fill="none" stroke="#c8c8c8" stroke-width="0.9"/></svg>
<div class="t" style="left:98.5px;top:177.56px;font-size:10.8px;color:#4a4a4a;font-weight:400;font-family:'Liberation Sans',sans-serif;">CAM Root</div>
<div class="a" style="left:58px;top:197px;width:155px;height:20px;background:#d3d3d3;"></div>
<svg class="a" style="left:40px;top:201px;" width="10" height="13" viewBox="0 0 10 13"><path d="M0.8 0.8 L8.8 6.5 L0.8 12.2 Z" fill="#fff" stroke="#333" stroke-width="1.4" stroke-linejoin="round"/></svg>
<svg class="a" style="left:64px;top:200px;" width="11" height="14" viewBox="0 0 11 14"><defs><radialGradient id="bg1" cx="0.35" cy="0.3" r="0.7"><stop offset="0" stop-color="#fffde0"/><stop offset="0.45" stop-color="#f7e24a"/><stop offset="1" stop-color="#e0a820"/></radialGradient></defs><circle cx="5.3" cy="5" r="4.6" fill="url(#bg1)" stroke="#e2a52a" stroke-width="0.7"/><rect x="3" y="9.6" width="4.6" height="4" rx="0.8" fill="#dfe3ea" stroke="#4c5670" stroke-width="0.9"/></svg>
<svg class="a" style="left:86px;top:199px;" width="17" height="17" viewBox="0 0 17 17"><path d="M0.6,3.5 L3,0.6 H8.7 L9.7,1.6 V6.6 H14.4 L15.8,8 V12.5 L12.7,15.5 H0.6 Z" fill="#f2f2f2" stroke="#333" stroke-width="1.1" stroke-linejoin="round"/><path d="M6.4,15.5 V9.2 L8.9,6.8 H14.2" fill="none" stroke="#333" stroke-width="1"/><path d="M1,9.6 H6.2 M8.9,1.6 V6.6 M14.6,8.3 V12.5" fill="none" stroke="#c8c8c8" stroke-width="0.9"/></svg>
<div class="t" style="left:116.5px;top:201.56px;font-size:10.8px;color:#4a4a4a;font-weight:400;font-family:'Liberation Sans',sans-serif;">CAM Component:1</div>
<div class="a" style="left:58px;top:221px;width:138px;height:20px;background:#d3d3d3;"></div>
<svg class="a" style="left:40px;top:225px;" width="10" height="13" viewBox="0 0 10 13"><path d="M0.8 0.8 L8.8 6.5 L0.8 12.2 Z" fill="#fff" stroke="#333" stroke-width="1.4" stroke-linejoin="round"/></svg>
<svg class="a" style="left:61px;top:225px;" width="16" height="14" viewBox="0 0 16 14"><path d="M0.5 0.5 H6 L7.5 2.5 H15.5 V13.5 H0.5 Z" fill="#f4f4f4" stroke="#444"/><path d="M0.5 3 H15.5" stroke="#444"/></svg>
<div class="t" style="left:91.5px;top:225.56px;font-size:10.8px;color:#4a4a4a;font-weight:400;font-family:'Liberation Sans',sans-serif;">CAM Named Views</div>
<div class="a" style="left:58px;top:245px;width:90px;height:20px;background:#d3d3d3;"></div>
<svg class="a" style="left:61px;top:247px;" width="16" height="16" viewBox="0 0 16 16"><path d="M1.5 0.5 H10 L13.5 4 V12 H1.5 Z" fill="#f4f4f4" stroke="#444"/><rect x="0.5" y="12" width="15" height="3.5" fill="#f2c531" stroke="#b3861a" stroke-width="0.8"/></svg>
<div class="t" style="left:91.5px;top:249.56px;font-size:10.8px;color:#4a4a4a;font-weight:400;font-family:'Liberation Sans',sans-serif;">Units: mm</div>
<div class="a" style="left:58px;top:269px;width:78px;height:20px;background:#d3d3d3;"></div>
<svg class="a" style="left:39px;top:273px;" width="12" height="12" viewBox="0 0 12 12"><defs><linearGradient id="ft" x1="0" y1="0" x2="1" y2="1"><stop offset="0" stop-color="#f4f4f4"/><stop offset="1" stop-color="#444"/></linearGradient></defs><path d="M11.2 0.8 V11.2 H0.8 Z" fill="url(#ft)" stroke="#333" stroke-width="1"/></svg>
<svg class="a" style="left:61px;top:272px;" width="17" height="15" viewBox="0 0 17 15"><path d="M0.5 4 H9 V14 H0.5 Z" fill="#eef2f6" stroke="#444"/><path d="M4 3 L9 0.5 L13 4 L8 7 Z" fill="#fff" stroke="#444"/><path d="M0.5 14 L4 9 H16 L12 14 Z" fill="#dfe6ee" stroke="#444"/></svg>
<div class="t" style="left:91.5px;top:273.56px;font-size:10.8px;color:#4a4a4a;font-weight:400;font-family:'Liberation Sans',sans-serif;">Setups</div>
<svg class="a" style="left:58px;top:283px;" width="80" height="5" viewBox="0 0 80 5"><g stroke="#7588ad" stroke-width="1.7" stroke-linecap="round"><path d="M1.5,3.6 L3.9,1.2" /><path d="M7.5,3.6 L9.9,1.2" /><path d="M13.5,3.6 L15.9,1.2" /><path d="M19.5,3.6 L21.9,1.2" /><path d="M25.5,3.6 L27.9,1.2" /><path d="M31.5,3.6 L33.9,1.2" /><path d="M37.5,3.6 L39.9,1.2" /><path d="M43.5,3.6 L45.9,1.2" /><path d="M49.5,3.6 L51.9,1.2" /><path d="M55.5,3.6 L57.9,1.2" /><path d="M61.5,3.6 L63.9,1.2" /><path d="M67.5,3.6 L69.9,1.2" /><path d="M73.5,3.6 L75.9,1.2" /></g></svg>
<div class="a" style="left:76px;top:293px;width:25px;height:20px;background:#d3d3d3;"></div>
<div class="a" style="left:101px;top:293px;width:57px;height:20px;background:#b3d5fb;"></div>
<svg class="a" style="left:57px;top:297px;" width="12" height="12" viewBox="0 0 12 12"><defs><linearGradient id="ft" x1="0" y1="0" x2="1" y2="1"><stop offset="0" stop-color="#f4f4f4"/><stop offset="1" stop-color="#444"/></linearGradient></defs><path d="M11.2 0.8 V11.2 H0.8 Z" fill="url(#ft)" stroke="#333" stroke-width="1"/></svg>
<svg class="a" style="left:79px;top:296px;" width="17" height="15" viewBox="0 0 17 15"><path d="M0.5 4 H9 V14 H0.5 Z" fill="#eef2f6" stroke="#444"/><path d="M4 3 L9 0.5 L13 4 L8 7 Z" fill="#fff" stroke="#444"/><path d="M0.5 14 L4 9 H16 L12 14 Z" fill="#dfe6ee" stroke="#444"/></svg>
<div class="t" style="left:110px;top:297.05px;font-size:11.4px;color:#1a3f80;font-weight:700;font-family:'Liberation Sans',sans-serif;">Setup1</div>
<svg class="a" style="left:76px;top:307px;" width="84" height="5" viewBox="0 0 84 5"><g stroke="#7588ad" stroke-width="1.7" stroke-linecap="round"><path d="M1.5,3.6 L3.9,1.2" /><path d="M7.5,3.6 L9.9,1.2" /><path d="M13.5,3.6 L15.9,1.2" /><path d="M19.5,3.6 L21.9,1.2" /><path d="M25.5,3.6 L27.9,1.2" /><path d="M31.5,3.6 L33.9,1.2" /><path d="M37.5,3.6 L39.9,1.2" /><path d="M43.5,3.6 L45.9,1.2" /><path d="M49.5,3.6 L51.9,1.2" /><path d="M55.5,3.6 L57.9,1.2" /><path d="M61.5,3.6 L63.9,1.2" /><path d="M67.5,3.6 L69.9,1.2" /><path d="M73.5,3.6 L75.9,1.2" /><path d="M79.5,3.6 L81.9,1.2" /></g></svg>
<div class="a" style="left:94px;top:317px;width:102px;height:20px;background:#d3d3d3;"></div>
<svg class="a" style="left:76px;top:321px;" width="10" height="13" viewBox="0 0 10 13"><path d="M0.8 0.8 L8.8 6.5 L0.8 12.2 Z" fill="#fff" stroke="#333" stroke-width="1.4" stroke-linejoin="round"/></svg>
<svg class="a" style="left:97px;top:320px;" width="16" height="16" viewBox="0 0 16 16"><path d="M2.5 0.5 H15.5 V11 L11 15.5 H0.5 V3 Z" fill="#f2f2f2" stroke="#444"/><path d="M3 6 C6 3 12 4 13 6 M3 9 H13 M3 11 C7 13 11 12 13 10" fill="none" stroke="#2f6fc8" stroke-width="1.6"/></svg>
<div class="t" style="left:127px;top:321.56px;font-size:10.8px;color:#4a4a4a;font-weight:400;font-family:'Liberation Sans',sans-serif;">[T1] Pocket1</div>
<div class="a" style="left:94px;top:341px;width:25px;height:20px;background:#d3d3d3;"></div>
<div class="a" style="left:119px;top:341px;width:110px;height:20px;background:#6a98c6;"></div>
<svg class="a" style="left:76px;top:345px;" width="10" height="13" viewBox="0 0 10 13"><path d="M0.8 0.8 L8.8 6.5 L0.8 12.2 Z" fill="#fff" stroke="#333" stroke-width="1.4" stroke-linejoin="round"/></svg>
<svg class="a" style="left:97px;top:343px;" width="16" height="15" viewBox="0 0 16 15"><path d="M8 0.8 L15.3 14.3 H0.7 Z" fill="#f7d51d" stroke="#8a6a00" stroke-width="1"/><rect x="7" y="4.5" width="2" height="5.5" fill="#222"/><rect x="7" y="11" width="2" height="2" fill="#222"/></svg>
<svg class="a" style="left:122px;top:344px;" width="16" height="14" viewBox="0 0 16 14"><path d="M1 8 L10 1 L15 5 L6 13 Z" fill="#e8eef5" stroke="#333"/><path d="M3 6.5 L12 1.5 M5 11 L13 5" stroke="#5a8fcf" stroke-width="1.5"/></svg>
<div class="t" style="left:152px;top:345.05px;font-size:11.4px;color:#fff;font-weight:700;font-family:'Liberation Sans',sans-serif;">[T2] Morph3</div>
<div class="a" style="left:711px;top:263px;width:532px;height:632px;background:#f0f0f0;border:1px solid #1883d7;box-shadow:2px 6px 16px rgba(0,0,0,0.22)"></div>
<div class="a" style="left:712px;top:264px;width:530px;height:30px;background:#fff;"></div>
<svg class="a" style="left:721px;top:271px;" width="14" height="14" viewBox="0 0 14 14"><rect x="0.5" y="1.5" width="12.5" height="12" rx="1.5" fill="#dfe8f5" stroke="#4f6fa0" stroke-width="0.9"/><rect x="3.5" y="0" width="6" height="3.5" rx="1" fill="#e2c46a" stroke="#8a6a20" stroke-width="0.7"/><path d="M2.5 8 L5.5 11.5 L11.5 3.5" fill="none" stroke="#e8502a" stroke-width="2.2"/></svg>
<div class="t" style="left:741.5px;top:273.37px;font-size:11.5px;color:#000;font-weight:400;font-family:'Liberation Sans',sans-serif;">Message Log</div>
<div class="t" style="left:1169.5px;top:272.94px;font-size:12px;color:#000;font-weight:400;font-family:'Liberation Sans',sans-serif;">?</div>
<svg class="a" style="left:1213px;top:272px;" width="11" height="11" viewBox="0 0 11 11"><path d="M0.5 0.5 L10.5 10.5 M10.5 0.5 L0.5 10.5" stroke="#111" stroke-width="1"/></svg>
<div class="a" style="left:723px;top:305px;width:508px;height:548px;background:#fff;border:1px solid #8c8c8c;border-right-color:#b5b5b5;border-bottom-color:#8c8c8c"></div>
<div class="t" style="left:727.8px;top:312.71px;font-size:13.333px;color:#000;font-weight:700;font-family:'Liberation Mono',monospace;">Warning: No passes to link.</div>
<div class="t" style="left:727.8px;top:328.71px;font-size:13.333px;color:#000;font-weight:400;font-family:'Liberation Mono',monospace;">Generation completed with 1 warning(s) in 394.9ms.</div>
<div class="t" style="left:727.8px;top:344.71px;font-size:13.333px;color:#000;font-weight:700;font-family:'Liberation Mono',monospace;">Warning: Empty toolpath.</div>
<div class="a" style="left:724px;top:860px;width:26px;height:22px;background:#cce4f7;border:2px solid #1e5aa8"></div>
<svg class="a" style="left:729px;top:863px;" width="16" height="16" viewBox="0 0 16 16"><defs><radialGradient id="er" cx="0.4" cy="0.35" r="0.7"><stop offset="0" stop-color="#e01a1a"/><stop offset="1" stop-color="#b00000"/></radialGradient></defs><circle cx="8" cy="8" r="7" fill="url(#er)"/><rect x="6.8" y="3.3" width="2.4" height="6" fill="#fff"/><rect x="6.8" y="10.6" width="2.4" height="2.2" fill="#fff"/></svg>
<div class="a" style="left:758px;top:860px;width:26px;height:22px;background:#cce4f7;border:2px solid #1e5aa8"></div>
<svg class="a" style="left:763px;top:863px;" width="16" height="16" viewBox="0 0 16 16"><path d="M8 2 L14.5 14 H1.5 Z" fill="#f3ef00" stroke="#d8cc00" stroke-width="0.6"/><rect x="7.1" y="5.5" width="1.8" height="4.8" fill="#222"/><rect x="7.1" y="11.2" width="1.8" height="1.8" fill="#222"/></svg>
<div class="a" style="left:792px;top:860px;width:26px;height:22px;background:#cce4f7;border:2px solid #1e5aa8"></div>
<svg class="a" style="left:797px;top:863px;" width="16" height="16" viewBox="0 0 16 16"><circle cx="8" cy="8" r="6.5" fill="#37a9dd"/><circle cx="8" cy="4.8" r="1.3" fill="#fff"/><path d="M6.5 7 H9 V11 H10 V12.2 H6 V11 H7 V8.2 H6.5 Z" fill="#fff"/></svg>
<div class="a" style="left:826px;top:860px;width:26px;height:22px;background:#cce4f7;border:2px solid #1e5aa8"></div>
<svg class="a" style="left:831px;top:863px;" width="16" height="16" viewBox="0 0 16 16"><defs><radialGradient id="bl" cx="0.4" cy="0.35" r="0.75"><stop offset="0" stop-color="#6a9ad8"/><stop offset="1" stop-color="#234f96"/></radialGradient></defs><circle cx="8" cy="8" r="7.5" fill="url(#bl)"/><rect x="7" y="3" width="2" height="6.5" rx="0.8" fill="#fff"/><rect x="7" y="10.8" width="2" height="2" fill="#fff"/></svg>
<div class="a" style="left:860px;top:860px;width:26px;height:22px;background:#e1e1e1;border:1px solid #adadad"></div>
<svg class="a" style="left:865px;top:863px;" width="16" height="16" viewBox="0 0 16 16"><ellipse cx="8" cy="8.5" rx="3.3" ry="4.5" fill="#22e0f0"/><circle cx="6" cy="2.8" r="1.4" fill="none" stroke="#222" stroke-width="0.9"/><circle cx="10" cy="2.8" r="1.4" fill="none" stroke="#222" stroke-width="0.9"/><path d="M1 2 L4 5 L4.8 7 M15 2 L12 5 L11.2 7 M0.5 10 L3 8.5 L4.7 8.5 M15.5 10 L13 8.5 L11.3 8.5 M2 15 L3 12 L5 11 M14 15 L13 12 L11 11" fill="none" stroke="#222" stroke-width="1"/></svg>
<div class="a" style="left:1157px;top:860px;width:73px;height:21px;background:#e1e1e1;border:2px solid #0078d7"></div>
<div class="t" style="left:1179.4px;top:866.23px;font-size:10.6px;color:#000;font-weight:400;font-family:'Liberation Sans',sans-serif;">Close</div>
<div class="a" style="left:4px;top:1011px;width:335px;height:25px;background:#d3d3d3;border:1px solid #a0a0a0"></div>
<div class="t" style="left:31px;top:1019.20px;font-size:9.8px;color:#555;font-weight:400;font-family:'Liberation Sans',sans-serif;">COMMENTS</div>
<svg class="a" style="left:317px;top:1018px;" width="11" height="11" viewBox="0 0 11 11"><circle cx="5.5" cy="5.5" r="5" fill="#222"/><path d="M2.5 5.5 H8.5 M5.5 2.5 V8.5" stroke="#fff" stroke-width="1.6"/></svg>
<div class="a" style="left:333px;top:1017px;width:1px;height:13px;background:#888;"></div>
<div class="a" style="left:335px;top:1017px;width:1px;height:13px;background:#888;"></div>
<div class="a" style="left:853px;top:1012px;width:145px;height:24px;background:#cdcdcd;"></div>
<div class="a" style="left:1005px;top:1012px;width:62px;height:24px;background:#cdcdcd;"></div>
<svg class="a" style="left:855px;top:1015px;" width="20" height="18" viewBox="0 0 20 18"><path d="M1.3,10 C4,7.5 12,7.6 15.8,9.3 C17.5,10.4 14.5,12.3 11.5,12.3 L5,12.3" fill="none" stroke="#222" stroke-width="1.1"/><rect x="8.2" y="3.5" width="2.8" height="13.3" fill="#fff" stroke="#222" stroke-width="0.9"/><path d="M9.6,0.7 L6.4,4.3 H12.8 Z" fill="#fff" stroke="#222" stroke-width="0.9" stroke-linejoin="round"/><path d="M2.4,12.3 L6,10 V14.6 Z" fill="#222"/></svg>
<svg class="a" style="left:878px;top:1021px;" width="6" height="4" viewBox="0 0 6 4"><path d="M0 0 H6 L3 4 Z" fill="#333"/></svg>
<svg class="a" style="left:889px;top:1015px;" width="17" height="17" viewBox="0 0 17 17"><rect x="0.8" y="5.5" width="15" height="10.5" fill="#f4f4f4" stroke="#333" stroke-width="1.1"/><rect x="3.5" y="8.7" width="9.5" height="4" fill="#aab3bd" stroke="#555" stroke-width="0.6"/><path d="M3 5 L5 2 L8 3.5 L10 1.5 L13 2.5 L12 5" fill="none" stroke="#666" stroke-width="0.8"/></svg>
<svg class="a" style="left:914px;top:1015px;" width="18" height="18" viewBox="0 0 18 18"><path d="M6,16.7 L1.6,11.6 C0.6,10.4 2,9 3.3,9.9 L5.3,11.6 L5.1,4.2 C5.1,2.6 7.2,2.6 7.2,4.2 L7.4,9 L7.5,2.2 C7.5,0.8 9.6,0.8 9.6,2.2 L9.7,9 L10.1,2.9 C10.1,1.6 12.2,1.6 12.2,2.9 L12.1,9.5 L12.6,6 C12.7,4.7 14.7,4.8 14.6,6.2 L14.4,11.5 C14.2,13.8 13,15.5 11.8,16.7 Z" fill="#f6f6f6" stroke="#222" stroke-width="1" stroke-linejoin="round"/></svg>
<svg class="a" style="left:940px;top:1015px;" width="18" height="17" viewBox="0 0 18 17"><circle cx="6.5" cy="9.5" r="4.8" fill="#d9eaf2" stroke="#333" stroke-width="1"/><path d="M10 13 L13 16" stroke="#333" stroke-width="2.2"/><path d="M12 3.5 H17 M14.5 1 V6 M12 7.5 H17" stroke="#333" stroke-width="0.9"/></svg>
<svg class="a" style="left:966px;top:1015px;" width="17" height="17" viewBox="0 0 17 17"><rect x="0.5" y="0.5" width="16" height="16" fill="none" stroke="#777" stroke-dasharray="1.5 1.5"/><circle cx="7.5" cy="7.5" r="6" fill="#d9eaf2" stroke="#333" stroke-width="1"/><path d="M11.5 11.5 L15.5 15.5" stroke="#333" stroke-width="2.4"/></svg>
<svg class="a" style="left:988px;top:1021px;" width="6" height="4" viewBox="0 0 6 4"><path d="M0 0 H6 L3 4 Z" fill="#333"/></svg>
<svg class="a" style="left:1008px;top:1015px;" width="17" height="17" viewBox="0 0 17 17"><rect x="0.8" y="0.8" width="15" height="11" fill="#99b2d6" stroke="#333" stroke-width="1.1"/><rect x="2.5" y="2.5" width="11.5" height="7.5" fill="#8eb0dc"/><path d="M6 14.5 H11 M8.5 12 V14.5" stroke="#333" stroke-width="1.1"/></svg>
<svg class="a" style="left:1028px;top:1021px;" width="6" height="4" viewBox="0 0 6 4"><path d="M0 0 H6 L3 4 Z" fill="#333"/></svg>
<svg class="a" style="left:1039px;top:1015px;" width="17" height="17" viewBox="0 0 17 17"><rect x="0.5" y="0.5" width="16" height="16" rx="1" fill="#f4f4f4" stroke="#333"/><path d="M4.5 0.5 V16.5 M8.5 0.5 V16.5 M12.5 0.5 V16.5 M0.5 4.5 H16.5 M0.5 8.5 H16.5 M0.5 12.5 H16.5" stroke="#7a7f96" stroke-width="1.8"/></svg>
<svg class="a" style="left:1059px;top:1021px;" width="6" height="4" viewBox="0 0 6 4"><path d="M0 0 H6 L3 4 Z" fill="#333"/></svg>
<div class="t" style="left:1844.6px;top:1019.23px;font-size:11.3px;color:#333;font-weight:700;font-family:'Liberation Sans',sans-serif;">Morph3</div>
<svg class="a" style="left:1894px;top:1017px;" width="17" height="15" viewBox="0 0 17 15"><path d="M8.5 1 L16 14 H1 Z" fill="#f7e21d" stroke="#5c4a00" stroke-width="1"/><rect x="7.6" y="4.5" width="1.8" height="5.5" fill="#222"/><rect x="7.6" y="11" width="1.8" height="1.8" fill="#222"/></svg>
<svg class="a" style="left:1800px;top:90px;" width="115" height="95" viewBox="0 0 115 95"><defs><radialGradient id="vc" cx="0.55" cy="0.6" r="0.6"><stop offset="0" stop-color="#c9cbce"/><stop offset="1" stop-color="#e6e6e6"/></radialGradient></defs>
<path d="M61.5 8.8 L87.4 30.7 L90.5 71.5 L52.8 82.7 L21.2 67.4 L23.8 26.7 Z" fill="url(#vc)"/>
<g fill="none" stroke="#888" stroke-width="1" stroke-dasharray="4 3">
<path d="M61.5 8.8 L23.8 26.7 L21.2 67.4 L52.8 82.7 L90.5 71.5 L87.4 30.7 Z"/>
<path d="M61.5 8.8 V54.2 M61.5 54.2 L21.2 67.4 M61.5 54.2 L90.5 71.5"/>
</g>
<text x="0" y="0" transform="translate(29 50) skewY(-30)" font-family="Liberation Sans" font-weight="700" font-size="10" textLength="26" lengthAdjust="spacingAndGlyphs" fill="#8a8c90">FRONT</text>
<text x="0" y="0" transform="translate(67 39) skewY(38)" font-family="Liberation Sans" font-weight="700" font-size="8" textLength="18" lengthAdjust="spacingAndGlyphs" fill="#8a8c90">RIGHT</text>
<text x="0" y="0" transform="translate(76 62) rotate(162)" font-family="Liberation Sans" font-weight="700" font-size="8" textLength="36" lengthAdjust="spacingAndGlyphs" fill="#9a9ca0">BOTTOM</text>
<path d="M15.5 66.5 L52.8 83" stroke="#6f78ff" stroke-width="2.4"/>
<path d="M52.8 83 L98 71" stroke="#f5a0a0" stroke-width="2.4"/>
<text x="4.5" y="68.5" font-family="Liberation Sans" font-size="12.5" stroke="#6f78ff" stroke-width="0.5" fill="#6f78ff">Z</text>
<text x="100" y="73.5" font-family="Liberation Sans" font-size="12.5" stroke="#f48a8a" stroke-width="0.5" fill="#f48a8a">X</text></svg>
<div class="a" style="left:0px;top:1040px;width:1920px;height:40px;background:#000;"></div>
<svg class="a" style="left:16px;top:1052px;" width="16" height="16" viewBox="0 0 16 16"><path d="M0 2.3 L6.6 1.4 V7.6 H0 Z M7.4 1.3 L16 0 V7.6 H7.4 Z M0 8.4 H6.6 V14.6 L0 13.7 Z M7.4 8.4 H16 V16 L7.4 14.7 Z" fill="#fff"/></svg>
<svg class="a" style="left:63px;top:1051px;" width="18" height="18" viewBox="0 0 18 18"><circle cx="11" cy="7" r="5.6" fill="none" stroke="#fff" stroke-width="1.4"/><path d="M7 11 L1 17" stroke="#fff" stroke-width="1.6"/></svg>
<svg class="a" style="left:110px;top:1052px;" width="21" height="17" viewBox="0 0 21 17"><rect x="3.5" y="0.7" width="14" height="15.6" fill="none" stroke="#fff" stroke-width="1.4"/><path d="M0.7 3 V14 M20.3 3 V14" stroke="#fff" stroke-width="1.4"/></svg>
<svg class="a" style="left:160px;top:1049px;" width="23" height="23" viewBox="0 0 23 23"><path d="M11.5,11.5 L1.97,6.00 A11,11 0 0,1 21.03,6.00 Z" fill="#db4437"/><path d="M11.5,11.5 L21.03,6.00 A11,11 0 0,1 11.50,22.50 Z" fill="#fcc934"/><path d="M11.5,11.5 L11.50,22.50 A11,11 0 0,1 1.97,6.00 Z" fill="#1e9e54"/><circle cx="11.5" cy="11.5" r="5.9" fill="#fff"/><circle cx="11.5" cy="11.5" r="4.6" fill="#4a7fe8"/></svg>
<svg class="a" style="left:208px;top:1048px;" width="24" height="24" viewBox="0 0 24 24"><rect x="0" y="0" width="24" height="24" rx="2.5" fill="#1e9ee6"/><rect x="3" y="3" width="18" height="18" rx="2" fill="#f2f2f2"/><path d="M10,6.5 H7 V17.5 H10 M14,6.5 H17 V17.5 H14" fill="none" stroke="#3c3c3c" stroke-width="2.6"/></svg>
<svg class="a" style="left:258px;top:1050px;" width="22" height="20" viewBox="0 0 22 20"><path d="M0.5,2 H8 L9.5,3.5 H21.5 V18 H0.5 Z" fill="#f5d270"/><rect x="1.5" y="2.5" width="4" height="1.5" fill="#3ea0e8"/><path d="M0.5,5 H21.5 V18.5 H0.5 Z" fill="#fbe29a"/><path d="M4,11 H18.5 V19 H13.5 V14.8 H9 V19 H4 Z" fill="#3aa6ec"/></svg>
<div class="a" style="left:294px;top:1040px;width:48px;height:40px;background:#3a3a3a;"></div>
<svg class="a" style="left:306px;top:1048px;" width="24" height="24" viewBox="0 0 24 24"><defs><linearGradient id="fo" x1="0" y1="0" x2="1" y2="1"><stop offset="0" stop-color="#f6a03a"/><stop offset="1" stop-color="#c8641a"/></linearGradient></defs><rect x="0" y="0" width="24" height="24" fill="#ddeef8"/><path d="M7.5,3 L18,3.5 L17.5,8 L12,7.8 L11.8,10.5 L16,10.7 L15.5,14.5 L11.5,14.3 L11.3,20 L7,20.5 Z" fill="url(#fo)"/><text x="15" y="22" font-family="Liberation Sans" font-weight="700" font-size="5" fill="#2a7fd4">360</text></svg>
<div class="a" style="left:151px;top:1078px;width:40px;height:2px;background:#76b9ed;"></div>
<div class="a" style="left:200px;top:1078px;width:40px;height:2px;background:#76b9ed;"></div>
<div class="a" style="left:249px;top:1078px;width:40px;height:2px;background:#76b9ed;"></div>
<div class="a" style="left:294px;top:1078px;width:48px;height:2px;background:#76b9ed;"></div>
<div class="t" style="left:1873px;top:1045.73px;font-size:11.3px;color:#fff;font-weight:400;font-family:'Liberation Sans',sans-serif;">20:12</div>
<div class="t" style="left:1860px;top:1063.83px;font-size:11.9px;color:#fff;font-weight:400;font-family:'Liberation Sans',sans-serif;">22-Mar-18</div>

</body></html>
